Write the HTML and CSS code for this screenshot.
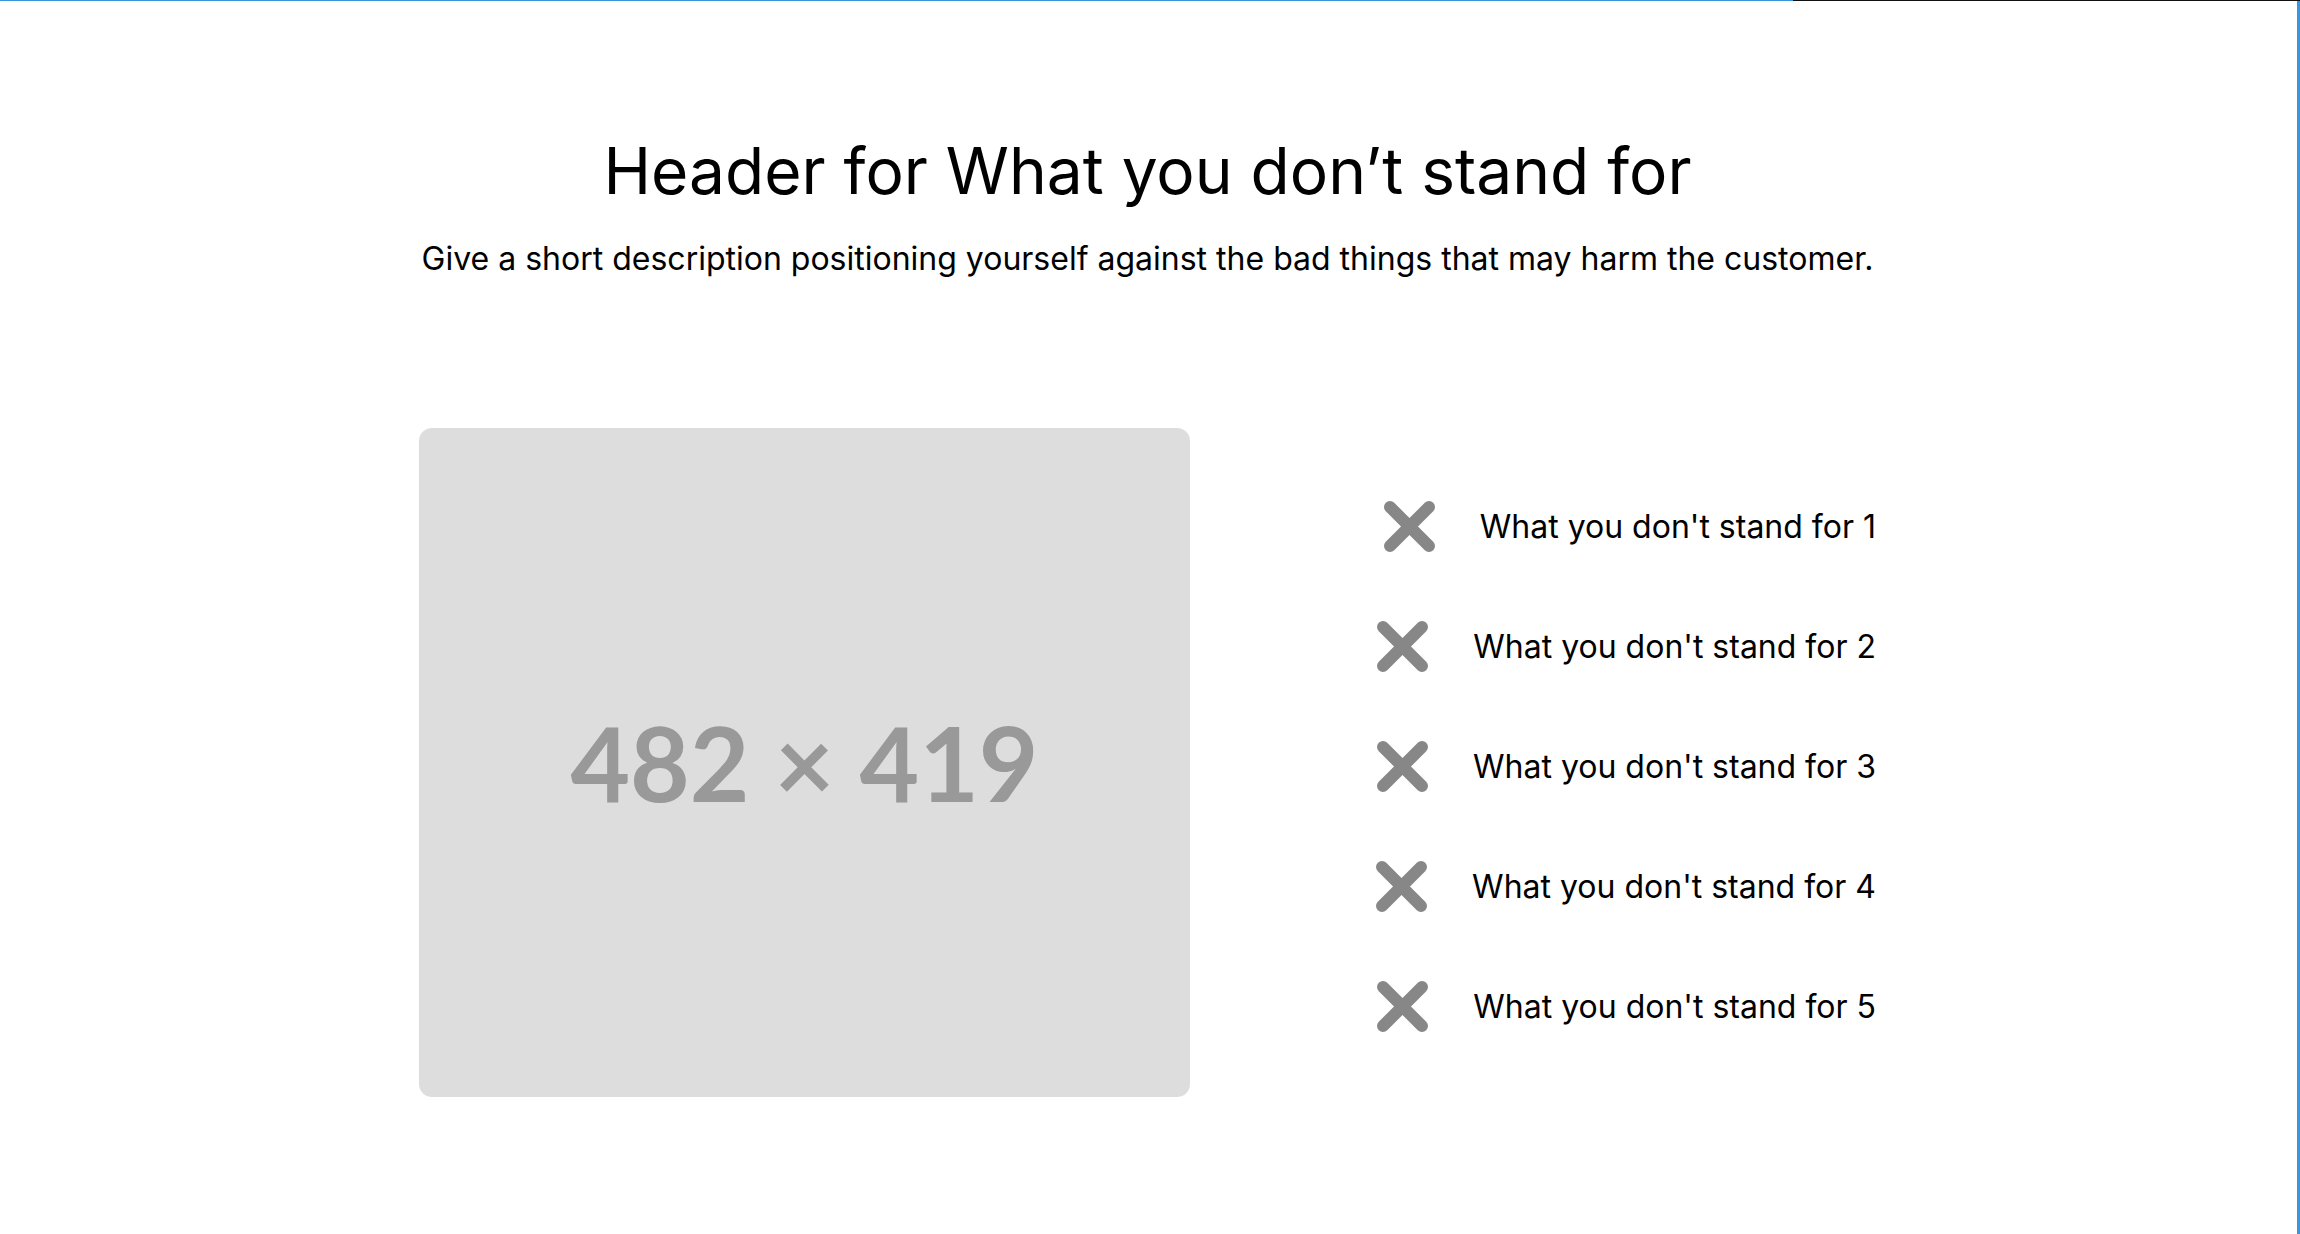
FILE: index.html
```html
<!DOCTYPE html>
<html lang="en">
<head>
<meta charset="utf-8">
<title>What you don't stand for</title>
<link rel="stylesheet" href="styles.css">
</head>
<body>
<div class="frame-top"><span class="frame-top-blue"></span><span class="frame-top-dark"></span></div>
<div class="frame-right"></div>
<main class="section">
  <header class="intro">
    <h1 class="title">Header for What you don’t stand for</h1>
    <p class="lead">Give a short description positioning yourself against the bad things that may harm the customer.</p>
  </header>
  <div class="content">
    <div class="placeholder"><span class="placeholder-text">482 × 419</span></div>
    <ul class="list">
      <li class="item"><svg class="x-icon" viewBox="0 0 51 51" width="51" height="51"><path d="M6 6 L45 45 M45 6 L6 45"/></svg><span class="item-text">What you don't stand for 1</span></li>
      <li class="item"><svg class="x-icon" viewBox="0 0 51 51" width="51" height="51"><path d="M6 6 L45 45 M45 6 L6 45"/></svg><span class="item-text">What you don't stand for 2</span></li>
      <li class="item"><svg class="x-icon" viewBox="0 0 51 51" width="51" height="51"><path d="M6 6 L45 45 M45 6 L6 45"/></svg><span class="item-text">What you don't stand for 3</span></li>
      <li class="item"><svg class="x-icon" viewBox="0 0 51 51" width="51" height="51"><path d="M6 6 L45 45 M45 6 L6 45"/></svg><span class="item-text">What you don't stand for 4</span></li>
      <li class="item"><svg class="x-icon" viewBox="0 0 51 51" width="51" height="51"><path d="M6 6 L45 45 M45 6 L6 45"/></svg><span class="item-text">What you don't stand for 5</span></li>
    </ul>
  </div>
</main>
</body>
</html>
```
FILE: styles.css
```css
html, body {
  margin: 0;
  padding: 0;
  background: #ffffff;
}
body {
  font-family: Inter, "Noto Sans", sans-serif;
  color: #000000;
  padding-right: 5px;
}
.frame-top {
  position: fixed;
  top: 0;
  left: 0;
  right: 0;
  height: 1px;
  display: flex;
  box-shadow: 0 1px 6px rgba(0, 0, 0, 0.03);
  z-index: 2;
}
.frame-top-blue {
  width: 1793px;
  background: #3a95dd;
}
.frame-top-dark {
  flex: 1;
  background: #111111;
}
.frame-right {
  position: fixed;
  top: 1px;
  right: 0;
  bottom: 0;
  width: 3px;
  background: #3a95dd;
  z-index: 2;
}
.section {
  width: 1457px;
  margin: 0 auto;
  padding-top: 133px;
}
.intro {
  text-align: center;
}
.title {
  margin: 0;
  font-size: 64px;
  font-weight: 400;
  line-height: 1.2;
}
.lead {
  margin: 27px 0 0;
  font-size: 32px;
  line-height: 1.4;
  font-weight: 400;
}
.content {
  display: flex;
  justify-content: space-between;
  align-items: center;
  margin-top: 146px;
}
.placeholder {
  width: 771px;
  height: 669px;
  border-radius: 13px;
  background: #dddddd;
  display: flex;
  align-items: center;
  justify-content: center;
}
.placeholder-text {
  font-family: Lato, "Liberation Sans", sans-serif;
  font-weight: 700;
  font-size: 103px;
  color: #999999;
  line-height: 1;
}
.list {
  list-style: none;
  margin: 0;
  padding: 9px 0 0;
  display: flex;
  flex-direction: column;
  align-items: flex-end;
  gap: 69px;
}
.item {
  display: flex;
  align-items: center;
  gap: 45px;
  height: 51px;
}
.x-icon {
  display: block;
  fill: none;
  stroke: #878787;
  stroke-width: 12;
  stroke-linecap: round;
}
.item-text {
  font-size: 32px;
  line-height: 1;
}
```
